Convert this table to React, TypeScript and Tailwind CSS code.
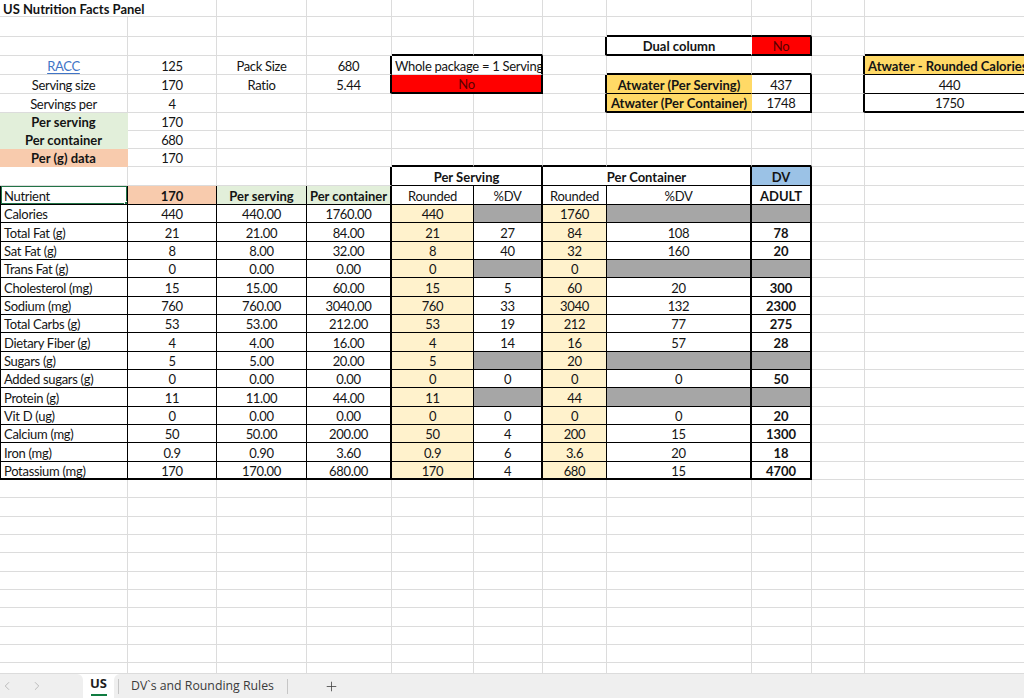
import { ChevronLeft, ChevronRight, Plus } from "lucide-react";
import clsx from "clsx";

type Spec = {
  text?: string;
  span?: number;
  bg?: string;
  bold?: boolean;
  left?: boolean;
  color?: string;
  link?: boolean;
  selected?: boolean;
};

const GREEN = "bg-[#e2efda]";
const ORANGE = "bg-[#f8cbad]";
const GOLD = "bg-[#ffd966]";
const CREAM = "bg-[#fff2cc]";
const GRAY = "bg-[#a6a6a6]";
const BLUE = "bg-[#9bc2e6]";
const RED = "bg-[#ff0000]";

// name, per(g), per serving, per container, rounded, %dv, rounded, %dv, dv
type Row = [string, string, string, string, string, string | null, string, string | null, string | null];

const nutrients: Row[] = [
  ["Calories", "440", "440.00", "1760.00", "440", null, "1760", null, null],
  ["Total Fat (g)", "21", "21.00", "84.00", "21", "27", "84", "108", "78"],
  ["Sat Fat (g)", "8", "8.00", "32.00", "8", "40", "32", "160", "20"],
  ["Trans Fat (g)", "0", "0.00", "0.00", "0", null, "0", null, null],
  ["Cholesterol (mg)", "15", "15.00", "60.00", "15", "5", "60", "20", "300"],
  ["Sodium (mg)", "760", "760.00", "3040.00", "760", "33", "3040", "132", "2300"],
  ["Total Carbs (g)", "53", "53.00", "212.00", "53", "19", "212", "77", "275"],
  ["Dietary Fiber (g)", "4", "4.00", "16.00", "4", "14", "16", "57", "28"],
  ["Sugars (g)", "5", "5.00", "20.00", "5", null, "20", null, null],
  ["Added sugars (g)", "0", "0.00", "0.00", "0", "0", "0", "0", "50"],
  ["Protein (g)", "11", "11.00", "44.00", "11", null, "44", null, null],
  ["Vit D (ug)", "0", "0.00", "0.00", "0", "0", "0", "0", "20"],
  ["Calcium (mg)", "50", "50.00", "200.00", "50", "4", "200", "15", "1300"],
  ["Iron (mg)", "0.9", "0.90", "3.60", "0.9", "6", "3.6", "20", "18"],
  ["Potassium (mg)", "170", "170.00", "680.00", "170", "4", "680", "15", "4700"],
];

const sheet: Record<string, Spec> = {};
const put = (r: number, c: number, s: Spec) => {
  sheet[`${r}-${c}`] = s;
};

put(1, 1, { text: "US Nutrition Facts Panel", bold: true, left: true, span: 2 });
put(3, 8, { text: "Dual column", bold: true });
put(3, 9, { text: "No", bg: RED, color: "text-[#5a0000]" });

put(4, 1, { text: "RACC", link: true });
put(4, 2, { text: "125" });
put(4, 3, { text: "Pack Size" });
put(4, 4, { text: "680" });
put(4, 5, { text: "Whole package = 1 Serving", left: true, span: 2 });
put(4, 11, { text: "Atwater - Rounded Calories", bold: true, left: true, bg: GOLD });

put(5, 1, { text: "Serving size" });
put(5, 2, { text: "170" });
put(5, 3, { text: "Ratio" });
put(5, 4, { text: "5.44" });
put(5, 5, { text: "No", bg: RED, span: 2, color: "text-[#5a0000]" });
put(5, 8, { text: "Atwater (Per Serving)", bold: true, bg: GOLD });
put(5, 9, { text: "437" });
put(5, 11, { text: "440" });

put(6, 1, { text: "Servings per" });
put(6, 2, { text: "4" });
put(6, 8, { text: "Atwater (Per Container)", bold: true, bg: GOLD });
put(6, 9, { text: "1748" });
put(6, 11, { text: "1750" });

put(7, 1, { text: "Per serving", bold: true, bg: GREEN });
put(7, 2, { text: "170" });
put(8, 1, { text: "Per container", bold: true, bg: GREEN });
put(8, 2, { text: "680" });
put(9, 1, { text: "Per (g) data", bold: true, bg: ORANGE });
put(9, 2, { text: "170" });

put(10, 5, { text: "Per Serving", bold: true, span: 2 });
put(10, 7, { text: "Per Container", bold: true, span: 2 });
put(10, 9, { text: "DV", bold: true, bg: BLUE });

put(11, 1, { text: "Nutrient", left: true, selected: true });
put(11, 2, { text: "170", bold: true, bg: ORANGE });
put(11, 3, { text: "Per serving", bold: true, bg: GREEN });
put(11, 4, { text: "Per container", bold: true, bg: GREEN });
put(11, 5, { text: "Rounded" });
put(11, 6, { text: "%DV" });
put(11, 7, { text: "Rounded" });
put(11, 8, { text: "%DV" });
put(11, 9, { text: "ADULT", bold: true });

nutrients.forEach((n, i) => {
  const r = 12 + i;
  put(r, 1, { text: n[0], left: true });
  put(r, 2, { text: n[1] });
  put(r, 3, { text: n[2] });
  put(r, 4, { text: n[3] });
  put(r, 5, { text: n[4], bg: CREAM });
  put(r, 6, n[5] === null ? { bg: GRAY } : { text: n[5] });
  put(r, 7, { text: n[6], bg: CREAM });
  put(r, 8, n[7] === null ? { bg: GRAY } : { text: n[7] });
  put(r, 9, n[8] === null ? { bg: GRAY } : { text: n[8], bold: true });
});

const R_GRID = "border-r border-r-[#dcdcdc]";
const R_NONE = "border-r border-r-transparent";
const R_THIN = "border-r border-r-black";
const R_THICK = "border-r-2 border-r-black";
const B_GRID = "border-b border-b-[#dcdcdc]";
const B_NONE = "border-b border-b-transparent";
const B_THIN = "border-b border-b-black";
const B_THICK = "border-b-2 border-b-black";

const between = (v: number, a: number, b: number) => v >= a && v <= b;

function rightBorder(r: number, c: number, filled: boolean) {
  if (r === 1 && c <= 2) return c === 1 ? R_NONE : R_GRID;
  if (between(r, 10, 26)) {
    if (c === 4) return R_THICK;
    if (c === 6 || c === 8 || c === 9) return R_THICK;
    if (r >= 11 && (c === 5 || c === 7)) return R_THIN;
    if (r >= 11 && c <= 3) return R_THIN;
  }
  if (r === 3) {
    if (c === 7 || c === 9) return R_THICK;
    if (c === 8) return R_NONE;
  }
  if (between(r, 4, 5) && (c === 4 || c === 6)) return R_THICK;
  if (between(r, 5, 6)) {
    if (c === 7 || c === 9) return R_THICK;
    if (c === 8) return R_NONE;
  }
  if (between(r, 4, 6) && c === 10) return R_THICK;
  return filled ? R_NONE : R_GRID;
}

function bottomBorder(r: number, c: number, filled: boolean) {
  if (r === 2 && between(c, 8, 9)) return B_THICK;
  if (r === 3 && (between(c, 8, 9) || between(c, 5, 6) || c === 11)) return B_THICK;
  if (r === 4 && between(c, 8, 9)) return B_THICK;
  if ((r === 4 || r === 5) && c === 11) return B_THIN;
  if (r === 5 && c === 5) return B_THICK;
  if (r === 5 && between(c, 8, 9)) return B_THIN;
  if (r === 6 && (between(c, 8, 9) || c === 11)) return B_THICK;
  if (r === 9 && between(c, 5, 9)) return B_THICK;
  if (r === 10 && between(c, 5, 9)) return B_THIN;
  if (between(r, 11, 25) && c <= 9) return B_THIN;
  if (r === 26 && c <= 9) return B_THICK;
  return filled ? B_NONE : B_GRID;
}

function Sheet() {
  const cells = [];
  for (let r = 1; r <= 37; r++) {
    let c = 1;
    while (c <= 11) {
      const s = sheet[`${r}-${c}`] ?? {};
      const span = s.span ?? 1;
      const last = c + span - 1;
      const filled = !!s.bg;
      cells.push(
        <div
          key={`${r}-${c}`}
          className={clsx(
            "flex items-center overflow-hidden whitespace-nowrap px-[3px] pt-[3px]",
            span === 2 && "col-span-2",
            s.left ? "justify-start" : "justify-center",
            s.bg,
            s.bold ? "font-bold" : "tracking-[-0.3px]",
            s.color ?? "text-[#141414]",
            rightBorder(r, last, filled),
            bottomBorder(r, c, filled),
            c === 1 && between(r, 11, 26) && "border-l border-l-black",
            s.selected && "relative z-10"
          )}
        >
          {s.link ? (
            <span className="text-[#3f74c6] underline decoration-1 underline-offset-2">{s.text}</span>
          ) : (
            s.text
          )}
          {s.selected && (
            <>
              <span className="pointer-events-none absolute -left-px -top-px -right-px -bottom-px border-2 border-[#217346]" />
              <span className="absolute -right-[4px] -bottom-[4px] h-[7px] w-[7px] border border-white bg-[#217346]" />
            </>
          )}
        </div>
      );
      c += span;
    }
  }
  return (
    <div className="grid grid-cols-[128px_89px_90px_85px_82px_69px_64px_145px_60px_53px_170px] grid-rows-[17px_20px_19px_19px_19px_19px_18px_18px_18px_19px_19px_18px_19px_18px_18px_19px_18px_18px_19px_18px_18px_19px_18px_18px_19px_18px_18px_19px_18px_18px_19px_18px_18px_19px_18px_18px_11px] w-[1035px] h-[674px]">
      {cells}
    </div>
  );
}

function Tabs() {
  return (
    <div className="flex h-[24px] w-[1024px] text-[12.3px] text-[#3b3b3b] [font-family:'Open_Sans',sans-serif]">
      <div className="flex w-[83px] items-center gap-[16px] rounded-tr-[6px] bg-[#efefef] text-[#b4b4b4]">
        <ChevronLeft size={14} strokeWidth={1.5} />
        <ChevronRight size={14} strokeWidth={1.5} />
      </div>
      <div className="flex w-[31px] flex-col items-center justify-end">
        <span className="text-[13px] font-bold leading-[16px] text-[#1e1e1e]">US</span>
        <span className="mt-[3px] mb-[2px] h-[2px] w-[16px] bg-[#107c41]" />
      </div>
      <div className="flex flex-1 items-center rounded-tl-[6px] bg-[#efefef]">
        <div className="ml-[4px] h-[15px] w-px bg-[#c6c6c6]" />
        <span className="ml-[12px] w-[156px]">DV`s and Rounding Rules</span>
        <div className="h-[15px] w-px bg-[#c6c6c6]" />
        <Plus size={15} strokeWidth={1.3} className="ml-[36px] text-[#444]" />
      </div>
    </div>
  );
}

export default function App() {
  return (
    <div className="h-[698px] w-[1024px] overflow-hidden bg-white text-[13px] [font-family:Lato,sans-serif]">
      <div className="w-[1024px] overflow-hidden">
        <Sheet />
      </div>
      <Tabs />
    </div>
  );
}
